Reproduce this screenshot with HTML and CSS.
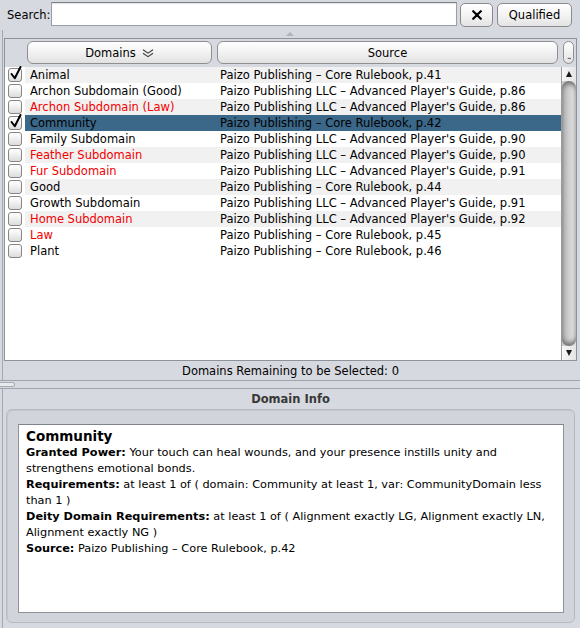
FILE: index.html
```html
<!DOCTYPE html>
<html>
<head>
<meta charset="utf-8">
<title>Domains</title>
<link rel="stylesheet" href="styles.css">
</head>
<body>
<div class="search-row">
  <label class="search-label">Search:</label>
  <div class="search-field"></div>
  <button class="btn btn-x"><svg width="10" height="10" viewBox="0 0 10 10"><path d="M1.2 1.2 L8.8 8.8 M8.8 1.2 L1.2 8.8" stroke="#000" stroke-width="2.2" stroke-linecap="round"/></svg></button>
  <button class="btn btn-q">Qualified</button>
</div>

<div class="top-pane">
  <div class="collapse-row"><span class="collapse-arrow"></span></div>
  <div class="table-box">
    <div class="thead">
      <div class="th-spacer"></div>
      <div class="th-domain"><div class="hbtn">Domains <svg class="sort-icon" width="12" height="9" viewBox="0 0 12 9"><path d="M1 0.8 L6 4.2 L11 0.8 M1 4.3 L6 7.7 L11 4.3" fill="none" stroke="#3a3a3a" stroke-width="1.1"/></svg></div></div>
      <div class="th-source"><div class="hbtn">Source</div></div>
      <div class="th-corner"><div class="hbtn hbtn-mini">...</div></div>
    </div>
    <div class="tbody">
      <div class="rows">
        <div class="row stripe"><div class="c-check"><span class="cb checked"><svg class="tick" width="13" height="15" viewBox="0 0 13 15"><path d="M2.5 8 L5.8 12.2 L11.5 1" fill="none" stroke="#000" stroke-width="2" stroke-linecap="round" stroke-linejoin="round"/></svg></span></div><div class="c-name">Animal</div><div class="c-src">Paizo Publishing – Core Rulebook, p.41</div></div>
        <div class="row"><div class="c-check"><span class="cb"></span></div><div class="c-name">Archon Subdomain (Good)</div><div class="c-src">Paizo Publishing LLC – Advanced Player's Guide, p.86</div></div>
        <div class="row stripe"><div class="c-check"><span class="cb"></span></div><div class="c-name red">Archon Subdomain (Law)</div><div class="c-src">Paizo Publishing LLC – Advanced Player's Guide, p.86</div></div>
        <div class="row sel"><div class="c-check"><span class="cb checked"><svg class="tick" width="13" height="15" viewBox="0 0 13 15"><path d="M2.5 8 L5.8 12.2 L11.5 1" fill="none" stroke="#000" stroke-width="2" stroke-linecap="round" stroke-linejoin="round"/></svg></span></div><div class="c-name">Community</div><div class="c-src">Paizo Publishing – Core Rulebook, p.42</div></div>
        <div class="row"><div class="c-check"><span class="cb"></span></div><div class="c-name">Family Subdomain</div><div class="c-src">Paizo Publishing LLC – Advanced Player's Guide, p.90</div></div>
        <div class="row stripe"><div class="c-check"><span class="cb"></span></div><div class="c-name red">Feather Subdomain</div><div class="c-src">Paizo Publishing LLC – Advanced Player's Guide, p.90</div></div>
        <div class="row"><div class="c-check"><span class="cb"></span></div><div class="c-name red">Fur Subdomain</div><div class="c-src">Paizo Publishing LLC – Advanced Player's Guide, p.91</div></div>
        <div class="row stripe"><div class="c-check"><span class="cb"></span></div><div class="c-name">Good</div><div class="c-src">Paizo Publishing – Core Rulebook, p.44</div></div>
        <div class="row"><div class="c-check"><span class="cb"></span></div><div class="c-name">Growth Subdomain</div><div class="c-src">Paizo Publishing LLC – Advanced Player's Guide, p.91</div></div>
        <div class="row stripe"><div class="c-check"><span class="cb"></span></div><div class="c-name red">Home Subdomain</div><div class="c-src">Paizo Publishing LLC – Advanced Player's Guide, p.92</div></div>
        <div class="row"><div class="c-check"><span class="cb"></span></div><div class="c-name red">Law</div><div class="c-src">Paizo Publishing – Core Rulebook, p.45</div></div>
        <div class="row"><div class="c-check"><span class="cb"></span></div><div class="c-name">Plant</div><div class="c-src">Paizo Publishing – Core Rulebook, p.46</div></div>
      </div>
      <div class="scrollbar">
        <div class="sb-btn"><span class="arrow-up"></span></div>
        <div class="sb-track"><div class="sb-thumb"></div></div>
        <div class="sb-btn"><span class="arrow-down"></span></div>
      </div>
    </div>
  </div>
  <div class="status">Domains Remaining to be Selected: 0</div>
</div>

<div class="divider"><span class="grip"></span></div>

<div class="bottom-pane">
  <div class="info-title">Domain Info</div>
  <div class="group">
    <div class="info-area">
      <div class="info-name">Community</div>
      <div><b>Granted Power:</b> Your touch can heal wounds, and your presence instills unity and<br>strengthens emotional bonds.</div>
      <div><b>Requirements:</b> at least 1 of ( domain: Community at least 1, var: CommunityDomain less<br>than 1 )</div>
      <div><b>Deity Domain Requirements:</b> at least 1 of ( Alignment exactly LG, Alignment exactly LN,<br>Alignment exactly NG )</div>
      <div><b>Source:</b> Paizo Publishing – Core Rulebook, p.42</div>
    </div>
  </div>
</div>
</body>
</html>
```

FILE: styles.css
```css
* { box-sizing: border-box; }
html, body { margin: 0; padding: 0; }
body {
  width: 580px;
  height: 628px;
  overflow: hidden;
  background: #d6d9df;
  font-family: "DejaVu Sans", "Liberation Sans", sans-serif;
  font-size: 11.5px;
  color: #000;
}

/* search row */
.search-row { display: flex; align-items: flex-start; height: 30px; padding-top: 3px; }
.search-label { width: 51px; padding-left: 7px; line-height: 24px; }
.search-field {
  width: 406px; height: 24px; margin-top: -1px;
  background: #fff;
  border: 1px solid #9a9ea6; border-top-color: #7e8289;
  box-shadow: inset 0 1px 1px rgba(0,0,0,0.12);
}
.btn {
  height: 24px; padding: 0;
  border: 1px solid #8a8a8a; border-radius: 5px;
  background: linear-gradient(#fefefe, #f4f4f4 50%, #e3e3e3);
  font: inherit; color: #000;
  display: flex; align-items: center; justify-content: center;
}
.btn-x { width: 33px; margin-left: 3px; }
.btn-q { width: 75px; margin-left: 4px; }

/* top pane */
.top-pane {
  margin-left: 2px; height: 350px;
  border-left: 1px solid #a3a7ae;
  display: flex; flex-direction: column;
}
.collapse-row { height: 8px; display: flex; justify-content: center; padding: 2px 4px 0 0; }
.collapse-arrow {
  width: 0; height: 0;
  border-left: 4px solid transparent; border-right: 4px solid transparent;
  border-bottom: 4px solid #aeb2b9;
}
.table-box {
  margin: 0 3px 0 1px; height: 323px; flex: none;
  border: 1px solid #8e9299;
  display: flex; flex-direction: column;
}
.thead { display: flex; height: 28px; padding-top: 2px; flex: none; }
.th-spacer { width: 20px; }
.th-domain { width: 190px; padding: 0 3px 0 2px; }
.th-source { width: 346px; padding: 0 3px 0 2px; }
.th-corner { width: 15px; padding-left: 2px; }
.hbtn {
  height: 23px; padding-top: 1px;
  border: 1px solid #8f8f8f; border-radius: 6px;
  background: linear-gradient(#ffffff, #f3f3f3 45%, #e2e2e2);
  display: flex; align-items: center; justify-content: center; gap: 6px;
}
.sort-icon { margin-top: 1px; }
.hbtn-mini {
  width: 11px; overflow: hidden; align-items: flex-end; padding: 0 0 2px 0;
  font-size: 8px; line-height: 8px; letter-spacing: -1.5px; color: #333;
}

.tbody { flex: 1; display: flex; background: #fff; }
.rows { width: 556px; }
.row { display: flex; height: 16px; line-height: 15px; white-space: nowrap; }
.c-check { width: 20px; padding: 1px 0 0 3px; }
.c-name { width: 190px; padding: 1px 0 0 5px; }
.c-src { width: 346px; padding: 1px 0 0 5px; }
.row.stripe .c-name, .row.stripe .c-src { background: #f1f1f1; }
.row.sel .c-name, .row.sel .c-src { background: #3b6789; }
.red { color: #f20000; }

.cb {
  display: block; position: relative;
  width: 14px; height: 14px;
  border: 1px solid #858585; border-radius: 3px;
  background: linear-gradient(#ffffff, #f0f0f0 50%, #dcdcdc);
}
.tick { position: absolute; left: 0; top: -3px; overflow: visible; }

.scrollbar {
  width: 15px; border-left: 1px solid #9c9c9c;
  display: flex; flex-direction: column;
  background: #e6e6e6;
}
.sb-btn {
  height: 14px; flex: none;
  background: linear-gradient(to right, #f7f7f7, #e4e4e4);
  display: flex; align-items: center; justify-content: center;
}
.arrow-up, .arrow-down {
  width: 0; height: 0;
  border-left: 3.5px solid transparent; border-right: 3.5px solid transparent;
}
.arrow-up { border-bottom: 6px solid #1a1a1a; }
.arrow-down { border-top: 6px solid #1a1a1a; }
.sb-track { flex: 1; background: linear-gradient(to right, #c9c9c9, #e2e2e2); }
.sb-thumb {
  height: 100%;
  border-radius: 7px;
  background: linear-gradient(to right, #9c9c9c 0%, #b5b5b5 18%, #cdcdcd 45%, #d8d8d8 75%, #c4c4c4 100%);
  box-shadow: inset 0 6px 5px -3px #6f6f6f, inset 0 -6px 5px -3px #6f6f6f;
}

.status { margin: 0 3px 0 1px; height: 19px; line-height: 19px; padding-top: 1px; text-align: center; }

/* divider */
.divider {
  height: 9px; padding-top: 1px;
  border-top: 1px solid #9ea2a9; border-bottom: 1px solid #9ea2a9;
}
.grip {
  display: block; width: 15px; height: 5px;
  border: 1px solid #a6aab1; border-left: none;
  border-radius: 0 3px 3px 0;
  background: #e7e9ed;
}

/* bottom pane */
.bottom-pane {
  margin-left: 2px; height: 239px; padding-left: 3px;
  border-left: 1px solid #a3a7ae;
}
.info-title {
  width: 569px; height: 20px; line-height: 20px;
  text-align: center; font-weight: bold; color: #383838;
}
.group {
  width: 569px; height: 214px;
  border: 1px solid #b7bac0; border-radius: 6px;
  padding: 14px 0 0 11px;
  background: #d1d4da;
  box-shadow: inset 1px 1px 0 #c4c7cd;
}
.info-area {
  width: 546px; height: 189px;
  background: #fff;
  border: 1px solid #8e9299; border-top-color: #7f838a;
  padding: 3px 7px;
  font-size: 11.3px; line-height: 16px; white-space: nowrap;
}
.info-name { font-size: 13.5px; font-weight: bold; line-height: 17px; }
```
